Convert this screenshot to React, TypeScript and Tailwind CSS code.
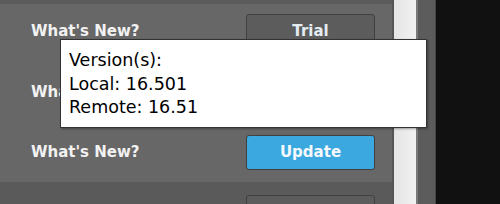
const ROWS = [
  { label: "What's New?", action: 'Trial', primary: false },
  { label: "What's New?", action: 'Trial', primary: false },
  { label: "What's New?", action: 'Update', primary: true },
];

const App = () => {
  return (
    <div
      className="relative flex h-[204px] w-[500px] overflow-hidden bg-[#111111]"
      style={{ fontFamily: '"DejaVu Sans", sans-serif' }}
    >
      <div className="flex w-[392px] shrink-0 flex-col bg-[#5a5a5a]">
        <div className="h-[4px] shrink-0 bg-[#5b5b5b]" />
        <div className="flex shrink-0 flex-col gap-[25.5px] bg-[#676767] pt-[10px] pb-[12px]">
          {ROWS.map((row, i) => (
            <div key={i} className="flex h-[35px] shrink-0 items-center">
              <span className="pl-[31px] text-[15px] font-bold text-[#f2f2f2]">{row.label}</span>
              <button
                className={
                  row.primary
                    ? 'ml-auto mr-[17px] h-[35px] w-[129px] rounded-[3px] border border-[#404040] bg-[#3ba9e0] text-[15px] font-bold text-[#f5f9fc]'
                    : 'ml-auto mr-[17px] h-[35px] w-[129px] rounded-[3px] border border-[#404040] bg-[#5c5c5c] text-[15px] font-bold text-[#e4ecf2]'
                }
              >
                {row.action}
              </button>
            </div>
          ))}
        </div>
        <div className="flex shrink-0 pt-[13px]">
          <div className="ml-auto mr-[17px] h-[30px] w-[129px] rounded-[3px] border border-[#404040] bg-[#5c5c5c]" />
        </div>
      </div>

      {/* scrollbar */}
      <div className="w-[2px] shrink-0 bg-[#555555]" />
      <div className="w-[22px] shrink-0 bg-gradient-to-r from-[#e4e4e4] to-[#f2f2f2]" />
      <div className="w-[2px] shrink-0 bg-[#7a7a7a]" />
      <div className="w-[17px] shrink-0 bg-[#5c5c5c]" />
      <div className="w-[1px] shrink-0 bg-[#444444]" />

      <div className="absolute left-[60px] top-[39px] w-[367px] border border-[#333333] bg-white px-[8px] pt-[9px] pb-[7px] text-[17.5px] leading-[23.5px] text-black shadow-[1px_1px_2px_rgba(0,0,0,0.35)]">
        <div>Version(s):</div>
        <div>Local: 16.501</div>
        <div>Remote: 16.51</div>
      </div>
    </div>
  );
};

export default App;
